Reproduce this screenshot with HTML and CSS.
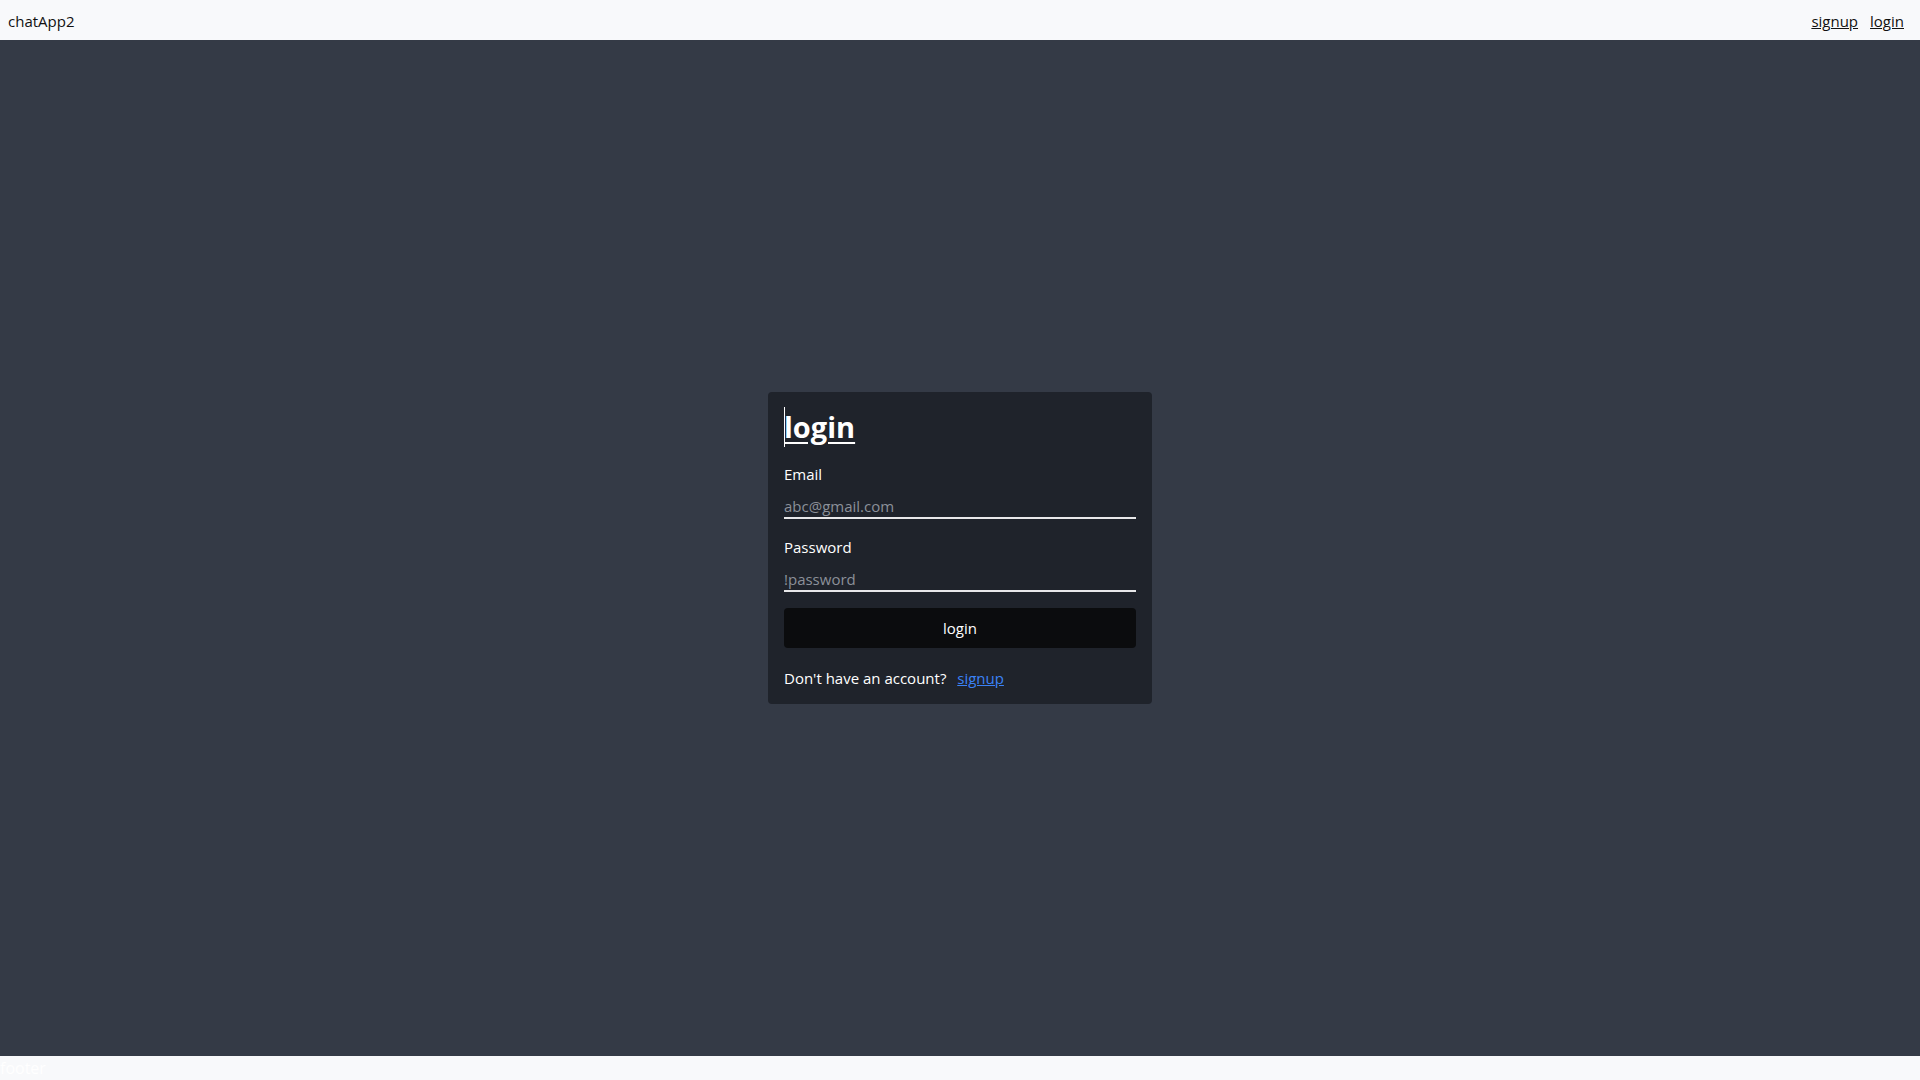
FILE: index.html
```html
<!DOCTYPE html>
<html lang="en">
<head>
<meta charset="utf-8">
<title>chatApp2</title>
<link rel="stylesheet" href="styles.css">
</head>
<body>
<div class="app">
  <header class="topbar">
    <span class="brand">chatApp2</span>
    <nav class="nav">
      <a href="#" class="nav-link">signup</a>
      <a href="#" class="nav-link">login</a>
    </nav>
  </header>
  <main class="main">
    <form class="card">
      <h1 class="title"><span class="title-text">login</span></h1>
      <label class="label" for="email">Email</label>
      <input class="input" id="email" type="email" placeholder="abc@gmail.com">
      <label class="label label-gap" for="password">Password</label>
      <input class="input" id="password" type="password" placeholder="!password">
      <button type="button" class="btn">login</button>
      <p class="switch">Don't have an account? <a href="#" class="switch-link">signup</a></p>
    </form>
  </main>
  <footer class="footer">footer</footer>
</div>
</body>
</html>
```
FILE: styles.css
```css
* { box-sizing: border-box; }
html, body { margin: 0; padding: 0; }
body {
  font-family: "Open Sans", "Noto Sans", sans-serif;
  font-size: 15px;
  background: #343a46;
}
.app {
  display: flex;
  flex-direction: column;
  height: 1080px;
}
.topbar {
  height: 40px;
  flex: none;
  background: #f8f9fb;
  display: flex;
  align-items: center;
  justify-content: space-between;
  padding: 2px 16px 0 8px;
  color: #111;
}
.brand { font-size: 15px; }
.nav { display: flex; gap: 12px; }
.nav-link { color: #111; text-decoration: underline; font-size: 15px; }
.main {
  flex: 1;
  display: flex;
  align-items: center;
  justify-content: center;
}
.card {
  width: 384px;
  background: #1f232b;
  border-radius: 4px;
  padding: 15px 16px 14px;
  display: flex;
  flex-direction: column;
  color: #fff;
}
.title {
  margin: 0;
  font-size: 29px;
  font-weight: 700;
  line-height: 40px;
  position: relative;
}
.title::before {
  content: "";
  position: absolute;
  left: 0;
  top: 0;
  width: 1px;
  height: 40px;
  background: #fff;
}
.title-text { text-decoration: underline; text-underline-offset: 4px; }
.label {
  margin-top: 15px;
  line-height: 24px;
}
.label-gap { margin-top: 16px; }
.input {
  margin-top: 5px;
  height: 28px;
  padding: 3px 0 0;
  line-height: 20px;
  background: transparent;
  border: 0;
  border-bottom: 2px solid #e8e8ea;
  color: #fff;
  font-family: inherit;
  font-size: 15px;
  outline: none;
}
.input::placeholder { color: #8b9099; }
.btn {
  margin-top: 16px;
  height: 40px;
  background: #0b0c0e;
  border: 0;
  border-radius: 4px;
  color: #fff;
  font-family: inherit;
  font-size: 15px;
}
.switch {
  margin: 18px 0 0;
  line-height: 24px;
}
.switch-link { color: #3b82f6; margin-left: 7px; }
.footer {
  height: 24px;
  flex: none;
  background: #f8f9fb;
  color: #fff;
  font-size: 16px;
  line-height: 24px;
}
```
